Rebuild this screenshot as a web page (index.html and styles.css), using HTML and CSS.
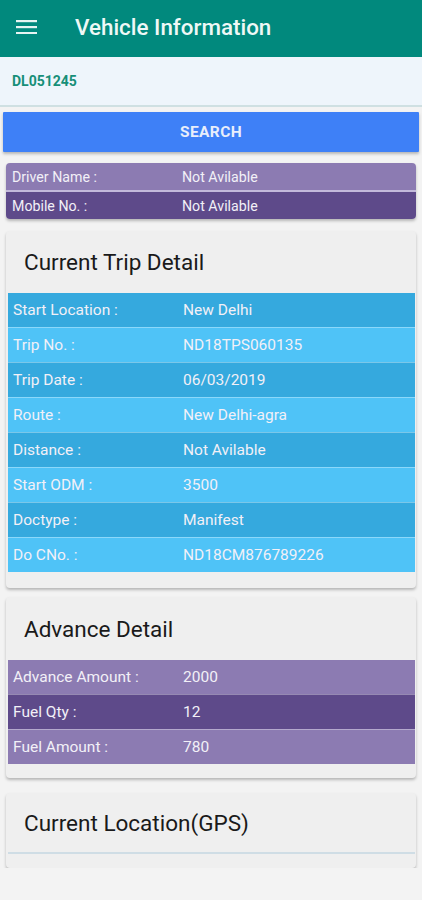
FILE: index.html
```html
<!DOCTYPE html>
<html lang="en">

<head>
    <meta charset="UTF-8">
    <meta name="viewport" content="width=device-width, initial-scale=1.0">
    <title>Vehicle Information</title>
    <link rel="stylesheet" href="styles.css">
</head>

<body>
    <header class="app-bar">
        <svg class="menu-icon" width="21" height="14" viewBox="0 0 21 14">
            <rect x="0" y="0" width="21" height="2.2" fill="#e6f4f2"/>
            <rect x="0" y="6" width="21" height="2.2" fill="#e6f4f2"/>
            <rect x="0" y="12" width="21" height="2.2" fill="#e6f4f2"/>
        </svg>
        <h1>Vehicle Information</h1>
    </header>

    <div class="search-field">DL051245</div>
    <button class="search-button">SEARCH</button>

    <div class="driver-card">
        <div class="row purple-light"><span class="label">Driver Name :</span><span>Not Avilable</span></div>
        <div class="row purple-dark"><span class="label">Mobile No. :</span><span>Not Avilable</span></div>
    </div>

    <section class="card">
        <h2>Current Trip Detail</h2>
        <div class="rows">
            <div class="row blue-dark"><span class="label">Start Location :</span><span>New Delhi</span></div>
            <div class="row blue-light"><span class="label">Trip No. :</span><span>ND18TPS060135</span></div>
            <div class="row blue-dark"><span class="label">Trip Date :</span><span>06/03/2019</span></div>
            <div class="row blue-light"><span class="label">Route :</span><span>New Delhi-agra</span></div>
            <div class="row blue-dark"><span class="label">Distance :</span><span>Not Avilable</span></div>
            <div class="row blue-light"><span class="label">Start ODM :</span><span>3500</span></div>
            <div class="row blue-dark"><span class="label">Doctype :</span><span>Manifest</span></div>
            <div class="row blue-light"><span class="label">Do CNo. :</span><span>ND18CM876789226</span></div>
        </div>
    </section>

    <section class="card advance">
        <h2>Advance Detail</h2>
        <div class="rows">
            <div class="row purple-light"><span class="label">Advance Amount :</span><span>2000</span></div>
            <div class="row purple-dark"><span class="label">Fuel Qty :</span><span>12</span></div>
            <div class="row purple-light"><span class="label">Fuel Amount :</span><span>780</span></div>
        </div>
    </section>

    <section class="card gps">
        <h2>Current Location(GPS)</h2>
        <div class="gps-line"></div>
    </section>
</body>

</html>
```

FILE: styles.css
```css
body {
    margin: 0;
    background-color: #f3f3f3;
    font-family: Roboto, "Liberation Sans", sans-serif;
}

.app-bar {
    height: 57px;
    background-color: #01897d;
    display: flex;
    align-items: center;
    padding-left: 16px;
    padding-bottom: 4px;
    box-sizing: border-box;
}

.menu-icon {
    margin-right: 38px;
}

.app-bar h1 {
    margin: 0;
    font-size: 22.4px;
    font-weight: 500;
    color: #eef8f6;
}

.search-field {
    height: 48px;
    background-color: #eef5fb;
    border-bottom: 2px solid #cfe0e2;
    display: flex;
    align-items: center;
    padding-left: 12px;
    font-size: 14px;
    font-weight: bold;
    color: #168f78;
}

.search-button {
    display: block;
    width: calc(100% - 6px);
    height: 40px;
    margin: 5px 3px 0;
    border: none;
    border-radius: 1px;
    background-color: #3e80f7;
    color: #e8eefb;
    font-family: Roboto, "Liberation Sans", sans-serif;
    font-size: 15.5px;
    font-weight: bold;
    letter-spacing: 0.4px;
    box-shadow: 0 2px 3px rgba(0, 0, 0, 0.25);
}

.driver-card {
    margin: 11px 6px 0;
    border-radius: 4px;
    overflow: hidden;
    box-shadow: 0 2px 3px rgba(0, 0, 0, 0.25);
}

.row {
    display: flex;
    align-items: center;
    font-size: 15.5px;
    color: #f2f0f7;
    padding-left: 6px;
}

.row .label {
    width: 170px;
    flex-shrink: 0;
}

.driver-card .row {
    height: 27px;
    font-size: 14.2px;
}

.driver-card .row + .row {
    border-top: 2px solid #c3b9db;
}

.purple-light {
    background-color: #8c7bb2;
}

.purple-dark {
    background-color: #5e4a8a;
}

.blue-dark {
    background-color: #35a9de;
}

.blue-light {
    background-color: #4fc3f7;
}

.card {
    margin: 12px 6px 0;
    background-color: #efefef;
    border-radius: 4px;
    box-shadow: 0 2px 3px rgba(0, 0, 0, 0.25);
    padding-bottom: 16px;
}

.card h2 {
    margin: 0;
    height: 62px;
    display: flex;
    align-items: center;
    padding-left: 18px;
    font-size: 22.5px;
    font-weight: 400;
    color: #1a1a1a;
}

.card .rows {
    margin: 0 1px 0 2px;
}

.card .row {
    height: 34px;
    padding-left: 5px;
}

.card .row + .row {
    border-top: 1px solid rgba(255, 255, 255, 0.35);
}

.advance {
    margin-top: 9px;
    padding-bottom: 14px;
}

.advance h2 {
    height: 63px;
}

.gps {
    margin-top: 15px;
    padding-bottom: 14px;
}

.gps h2 {
    height: 59px;
}

.gps-line {
    height: 2px;
    margin: 0 1px 0 2px;
    background-color: #cfdde5;
}
```
